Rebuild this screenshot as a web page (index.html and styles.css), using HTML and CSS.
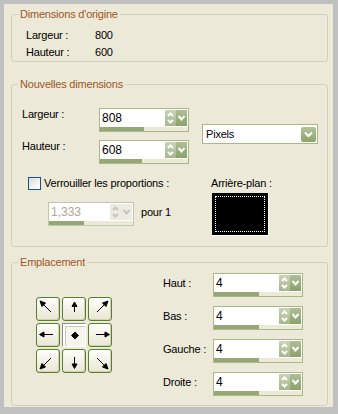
FILE: index.html
```html
<!DOCTYPE html>
<html lang="fr">
<head>
    <meta charset="UTF-8">
    <title>Taille de la zone de travail</title>
    <link rel="stylesheet" href="styles.css">
</head>
<body>
    <div class="dialog">
        <div class="group group-origin">
            <div class="group-title">Dimensions d'origine</div>
            <div class="info-rows">
                <div class="info-row"><span class="info-label">Largeur :</span><span>800</span></div>
                <div class="info-row"><span class="info-label">Hauteur :</span><span>600</span></div>
            </div>
        </div>

        <div class="group group-new">
            <div class="group-title">Nouvelles dimensions</div>
            <div class="new-body">
                <div class="size-block">
                    <div class="size-fields">
                        <div class="field-row">
                            <span class="field-label">Largeur :</span>
                            <div class="spin">
                                <div class="spin-main">
                                    <span class="spin-value">808</span>
                                    <span class="spin-arrows"><svg width="11" height="16" viewBox="0 0 11 16"><path d="M3 6 L5.5 3.5 L8 6" /><path d="M3 10 L5.5 12.5 L8 10" /></svg></span>
                                    <span class="spin-drop"><svg width="11" height="16" viewBox="0 0 11 16"><path d="M2.5 6 L5.5 9.5 L8.5 6" /></svg></span>
                                </div>
                                <div class="spin-track"><div class="spin-fill" style="width: 44px"></div></div>
                            </div>
                        </div>
                        <div class="field-row">
                            <span class="field-label">Hauteur :</span>
                            <div class="spin">
                                <div class="spin-main">
                                    <span class="spin-value">608</span>
                                    <span class="spin-arrows"><svg width="11" height="16" viewBox="0 0 11 16"><path d="M3 6 L5.5 3.5 L8 6" /><path d="M3 10 L5.5 12.5 L8 10" /></svg></span>
                                    <span class="spin-drop"><svg width="11" height="16" viewBox="0 0 11 16"><path d="M2.5 6 L5.5 9.5 L8.5 6" /></svg></span>
                                </div>
                                <div class="spin-track"><div class="spin-fill" style="width: 42px"></div></div>
                            </div>
                        </div>
                    </div>
                    <div class="select">
                        <span class="select-value">Pixels</span>
                        <span class="select-btn"><svg width="15" height="15" viewBox="0 0 15 15"><path d="M4 5.5 L7.5 9 L11 5.5" /></svg></span>
                    </div>
                </div>

                <div class="ratio-block">
                    <div class="ratio-left">
                        <div class="check-row"><span class="checkbox"></span>Verrouiller les proportions :</div>
                        <div class="ratio-row">
                            <div class="spin spin-ratio disabled">
                                <div class="spin-main">
                                    <span class="spin-value">1,333</span>
                                    <span class="spin-arrows"><svg width="11" height="16" viewBox="0 0 11 16"><path d="M3 6 L5.5 3.5 L8 6" /><path d="M3 10 L5.5 12.5 L8 10" /></svg></span>
                                    <span class="spin-drop"><svg width="11" height="16" viewBox="0 0 11 16"><path d="M2.5 6 L5.5 9.5 L8.5 6" /></svg></span>
                                </div>
                                <div class="spin-track"><div class="spin-fill" style="width: 35px"></div></div>
                            </div>
                            <span class="pour">pour 1</span>
                        </div>
                    </div>
                    <div class="bg-col">
                        <div class="bg-label">Arrière-plan :</div>
                        <div class="swatch"><div class="swatch-focus"></div></div>
                    </div>
                </div>
            </div>
        </div>

        <div class="group group-place">
            <div class="group-title">Emplacement</div>
            <div class="place-body">
                <div class="nudge-grid">
                    <button class="nudge"><svg width="22" height="22" viewBox="1 1 22 22"><line x1="15" y1="15" x2="7" y2="7" /><polygon points="4,4 9.5,6 6,9.5" /></svg></button>
                    <button class="nudge"><svg width="22" height="22" viewBox="1 1 22 22"><line x1="12.5" y1="15" x2="12.5" y2="8" /><polygon points="12.5,5 10,9.5 15,9.5" /></svg></button>
                    <button class="nudge"><svg width="22" height="22" viewBox="1 1 22 22"><line x1="9" y1="15" x2="17" y2="7" /><polygon points="20,4 14.5,6 18,9.5" /></svg></button>
                    <button class="nudge"><svg width="22" height="22" viewBox="1 1 22 22"><line x1="17" y1="11.5" x2="7" y2="11.5" /><polygon points="3.5,11.5 8,9 8,14" /></svg></button>
                    <button class="nudge nudge-center"><svg width="22" height="22" viewBox="1 1 22 22"><polygon points="13,9 16.5,12.5 13,16 9.5,12.5" /></svg></button>
                    <button class="nudge"><svg width="22" height="22" viewBox="1 1 22 22"><line x1="8" y1="11.5" x2="18" y2="11.5" /><polygon points="21.5,11.5 17,9 17,14" /></svg></button>
                    <button class="nudge"><svg width="22" height="22" viewBox="1 1 22 22"><line x1="15" y1="9" x2="7" y2="17" /><polygon points="4,20 6,14.5 9.5,18" /></svg></button>
                    <button class="nudge"><svg width="22" height="22" viewBox="1 1 22 22"><line x1="12.5" y1="8" x2="12.5" y2="16" /><polygon points="12.5,19.5 10,15 15,15" /></svg></button>
                    <button class="nudge"><svg width="22" height="22" viewBox="1 1 22 22"><line x1="9" y1="9" x2="17" y2="17" /><polygon points="20,20 18,14.5 14.5,18" /></svg></button>
                </div>

                <div class="margin-fields">
                    <div class="margin-row">
                        <span class="margin-label">Haut :</span>
                        <div class="spin">
                            <div class="spin-main">
                                <span class="spin-value">4</span>
                                <span class="spin-arrows"><svg width="11" height="16" viewBox="0 0 11 16"><path d="M3 6 L5.5 3.5 L8 6" /><path d="M3 10 L5.5 12.5 L8 10" /></svg></span>
                                <span class="spin-drop"><svg width="11" height="16" viewBox="0 0 11 16"><path d="M2.5 6 L5.5 9.5 L8.5 6" /></svg></span>
                            </div>
                            <div class="spin-track"><div class="spin-fill" style="width: 45px"></div></div>
                        </div>
                    </div>
                    <div class="margin-row">
                        <span class="margin-label">Bas :</span>
                        <div class="spin">
                            <div class="spin-main">
                                <span class="spin-value">4</span>
                                <span class="spin-arrows"><svg width="11" height="16" viewBox="0 0 11 16"><path d="M3 6 L5.5 3.5 L8 6" /><path d="M3 10 L5.5 12.5 L8 10" /></svg></span>
                                <span class="spin-drop"><svg width="11" height="16" viewBox="0 0 11 16"><path d="M2.5 6 L5.5 9.5 L8.5 6" /></svg></span>
                            </div>
                            <div class="spin-track"><div class="spin-fill" style="width: 45px"></div></div>
                        </div>
                    </div>
                    <div class="margin-row">
                        <span class="margin-label">Gauche :</span>
                        <div class="spin">
                            <div class="spin-main">
                                <span class="spin-value">4</span>
                                <span class="spin-arrows"><svg width="11" height="16" viewBox="0 0 11 16"><path d="M3 6 L5.5 3.5 L8 6" /><path d="M3 10 L5.5 12.5 L8 10" /></svg></span>
                                <span class="spin-drop"><svg width="11" height="16" viewBox="0 0 11 16"><path d="M2.5 6 L5.5 9.5 L8.5 6" /></svg></span>
                            </div>
                            <div class="spin-track"><div class="spin-fill" style="width: 45px"></div></div>
                        </div>
                    </div>
                    <div class="margin-row">
                        <span class="margin-label">Droite :</span>
                        <div class="spin">
                            <div class="spin-main">
                                <span class="spin-value">4</span>
                                <span class="spin-arrows"><svg width="11" height="16" viewBox="0 0 11 16"><path d="M3 6 L5.5 3.5 L8 6" /><path d="M3 10 L5.5 12.5 L8 10" /></svg></span>
                                <span class="spin-drop"><svg width="11" height="16" viewBox="0 0 11 16"><path d="M2.5 6 L5.5 9.5 L8.5 6" /></svg></span>
                            </div>
                            <div class="spin-track"><div class="spin-fill" style="width: 45px"></div></div>
                        </div>
                    </div>
                </div>
            </div>
        </div>
    </div>
</body>
</html>
```

FILE: styles.css
```css
* {
    box-sizing: border-box;
    padding: 0;
    margin: 0;
}

body {
    font-family: 'Liberation Sans', Arial, sans-serif;
    font-size: 11px;
    letter-spacing: -0.2px;
    color: #000;
    background-color: #c0c0c0;
}

.dialog {
    display: flow-root;
    height: 403px;
    margin: 4px 5px 0 4px;
    background-color: #ece9d8;
}

/* Group boxes */
.group {
    border: 1px solid #d0d0bf;
    border-radius: 3px;
    margin: 0 5px 0 7px;
}

.group-origin {
    margin-top: 10px;
}

.group-new {
    margin-top: 22px;
}

.group-place {
    margin-top: 15px;
}

.group-title {
    width: fit-content;
    margin: -7px 0 0 6px;
    padding: 0 2px;
    line-height: 13px;
    color: #a0561c;
    background-color: #ece9d8;
}

.info-rows {
    padding: 6px 0 0 14px;
}

.info-row {
    display: flex;
    line-height: 17px;
}

.info-label {
    width: 69px;
}

/* Nouvelles dimensions */
.new-body {
    padding: 17px 0 10px 10px;
}

.size-block {
    display: flex;
    align-items: flex-start;
}

.size-fields {
    display: flex;
    flex-direction: column;
    gap: 8px;
}

.field-row {
    display: flex;
    align-items: flex-start;
}

.field-label {
    width: 77px;
    line-height: 13px;
}

.select {
    display: flex;
    align-items: center;
    width: 116px;
    height: 20px;
    margin: 16px 0 0 13px;
    padding: 0 1px 0 3px;
    border: 1px solid #a5ba84;
    background-color: #fff;
}

.select-value {
    flex: 1;
}

.select-btn {
    display: block;
    width: 15px;
    height: 15px;
    border-radius: 2px;
    background: linear-gradient(#b3c39a, #8da46c);
}

.select-btn svg,
.spin svg {
    display: block;
    fill: none;
    stroke: #fff;
    stroke-width: 2;
}

.ratio-block {
    display: flex;
    margin-top: 13px;
}

.ratio-left {
    flex: none;
    width: 189px;
}

.check-row {
    display: flex;
    align-items: center;
    padding-left: 6px;
    line-height: 13px;
}

.checkbox {
    width: 13px;
    height: 13px;
    margin-right: 3px;
    border: 1px solid #1c5180;
    background: linear-gradient(135deg, #dcdcd7, #fff);
}

.ratio-row {
    display: flex;
    align-items: flex-start;
    margin-top: 12px;
    padding-left: 26px;
}

.pour {
    margin: 4px 0 0 7px;
    line-height: 13px;
}

.bg-label {
    line-height: 13px;
}

.swatch {
    width: 57px;
    height: 43px;
    margin: 3px 0 0 1px;
    padding: 3px;
    background-color: #000;
    border-right: 1px solid #fff;
    border-bottom: 1px solid #fff;
}

.swatch-focus {
    height: 100%;
    border: 1px dotted #fff;
}

/* Spin controls */
.spin {
    display: flex;
    flex-direction: column;
    width: 90px;
    height: 24px;
    border: 1px solid #a5ba84;
    background-color: #fff;
}

.spin-ratio {
    width: 86px;
}

.spin-main {
    display: flex;
    align-items: center;
    height: 18px;
    padding-right: 1px;
}

.spin-value {
    flex: 1;
    padding-left: 2px;
    font-size: 12px;
    letter-spacing: 0;
}

.spin-arrows,
.spin-drop {
    display: block;
    width: 11px;
    height: 16px;
}

.spin-arrows {
    background: linear-gradient(#c9d4b7, #a6b68c);
}

.spin-drop {
    background: linear-gradient(#afbf96, #8ba16a);
}

.spin-track {
    height: 4px;
    background-color: #ece9d8;
}

.spin-fill {
    height: 100%;
    background-color: #97a676;
}

.disabled {
    border-color: #bccaa6;
}

.disabled .spin-value {
    color: #aca899;
}

.disabled .spin-arrows,
.disabled .spin-drop {
    background: #ecebe3;
}

.disabled svg {
    stroke: #c8c6ba;
}

/* Emplacement */
.place-body {
    display: flex;
    align-items: flex-start;
    padding: 0 0 9px 24px;
}

.nudge-grid {
    display: grid;
    grid-template-columns: repeat(3, 24px);
    grid-auto-rows: 24px;
    gap: 2px;
    margin-top: 28px;
}

.nudge {
    display: flex;
    align-items: center;
    justify-content: center;
    border: 1px solid #55802c;
    border-radius: 3px;
    background: linear-gradient(#fefefb, #e9e6d4);
    box-shadow: inset -1px -1px 0 #d6d0b8;
}

.nudge svg {
    display: block;
    fill: #000;
    stroke: #000;
    stroke-width: 1;
}

.nudge-center {
    border-radius: 0;
    border-color: #8e8c80 #fff #fff #8e8c80;
    background: #f5f4ef;
    box-shadow: inset 2px 2px 0 #fff, inset 3px 3px 0 #c9c7bb;
}

.margin-fields {
    display: flex;
    flex-direction: column;
    gap: 9px;
    margin: 4px 0 0 51px;
}

.margin-row {
    display: flex;
    align-items: flex-start;
}

.margin-label {
    width: 50px;
    margin-top: 4px;
    line-height: 13px;
}
```
